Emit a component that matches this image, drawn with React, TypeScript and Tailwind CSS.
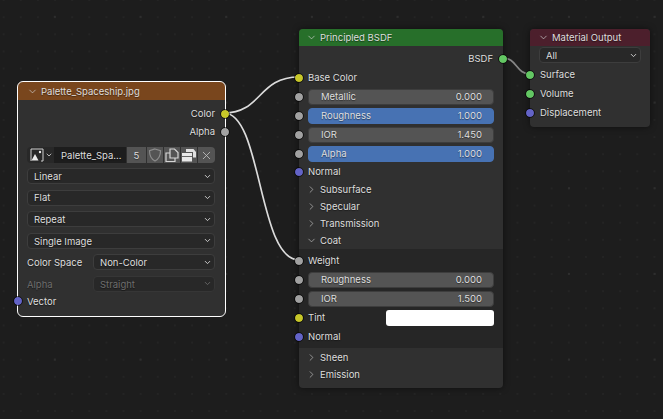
import { ChevronDown, ChevronRight, X } from 'lucide-react';

const YELLOW = 'bg-[#c7c729]';
const GRAY = 'bg-[#a1a1a1]';
const PURPLE = 'bg-[#6363c7]';
const GREEN = 'bg-[#63c763]';

function Socket({ color, side = 'left' }: { color: string; side?: 'left' | 'right' }) {
  return (
    <div
      className={`absolute top-1/2 -mt-[4px] size-[8px] rounded-full outline outline-1 outline-black/60 ${color} ${
        side === 'left' ? '-left-[4px]' : '-right-[4px]'
      }`}
    />
  );
}

function LabelRow({ label, color, pad = 'pl-[9px]' }: { label: string; color: string; pad?: string }) {
  return (
    <div className={`relative flex h-[19px] items-center ${pad}`}>
      <Socket color={color} />
      <span>{label}</span>
    </div>
  );
}

function OutputRow({ label, color }: { label: string; color: string }) {
  return (
    <div className="relative flex h-[19px] items-center justify-end pr-[10px]">
      <span>{label}</span>
      <Socket color={color} side="right" />
    </div>
  );
}

function Slider({ label, value, active }: { label: string; value: string; active?: boolean }) {
  return (
    <div className="relative flex h-[19px] items-center pl-[9px] pr-[9px]">
      <Socket color={GRAY} />
      <div
        className={`flex h-[16px] w-full items-center justify-between rounded-[4px] border pl-[12px] pr-[11px] ${
          active ? 'border-[#4772b3] bg-[#4772b3]' : 'border-[#3d3d3d] bg-[#545454]'
        }`}
      >
        <span>{label}</span>
        <span>{value}</span>
      </div>
    </div>
  );
}

function PanelToggle({ label, open }: { label: string; open?: boolean }) {
  return (
    <div className="flex h-[17px] items-center gap-[3px] pl-[7px]">
      {open ? (
        <ChevronDown className="size-[11px] text-[#bdbdbd]" strokeWidth={1.5} />
      ) : (
        <ChevronRight className="size-[11px] text-[#bdbdbd]" strokeWidth={1.5} />
      )}
      <span>{label}</span>
    </div>
  );
}

function Select({ label, disabled, className = '' }: { label: string; disabled?: boolean; className?: string }) {
  return (
    <div
      className={`flex h-[16px] items-center justify-between rounded-[4px] border bg-[#282828] pl-[6px] pr-[2px] ${
        disabled ? 'border-[#363636] text-[#6e6e6e]' : 'border-[#3d3d3d]'
      } ${className}`}
    >
      <span>{label}</span>
      <ChevronDown className={`size-[9px] ${disabled ? 'text-[#666]' : 'text-[#d0d0d0]'}`} strokeWidth={2.5} />
    </div>
  );
}

function NodeHeader({ title, color, className = 'h-[17px] pl-[7px]' }: { title: string; color: string; className?: string }) {
  return (
    <div className={`flex items-center gap-[3px] rounded-t-[4px] ${color} ${className}`}>
      <ChevronDown className="size-[11px] text-[#d0d0d0]" strokeWidth={1.5} />
      <span>{title}</span>
    </div>
  );
}

function ImageIcon() {
  return (
    <svg viewBox="0 0 14 14" className="size-[14px]">
      <path d="M1 13V1h12v12h-2" fill="none" stroke="#cfcfcf" strokeWidth="1" />
      <path d="M1.500 12.500 5 6l3.500 6.500z" fill="#ececec" />
      <circle cx="10" cy="4" r="1.200" fill="#ececec" />
    </svg>
  );
}

function ShieldIcon() {
  return (
    <svg viewBox="0 0 14 14" className="size-[14px]">
      <path d="M7 1 12.500 2.800c0 5-1 8-5.500 10.200C2.500 10.800 1.500 7.800 1.500 2.800z" fill="none" stroke="#8c8c8c" strokeWidth="1.200" />
    </svg>
  );
}

function CopyIcon() {
  return (
    <svg viewBox="0 0 14 14" className="size-[14px]">
      <path d="M5 10V1h4.500L13 4.500V10z" fill="none" stroke="#d6d6d6" strokeWidth="1.200" />
      <path d="M5 5H1v8.500h9V10" fill="none" stroke="#d6d6d6" strokeWidth="1.200" />
    </svg>
  );
}

function PackIcon() {
  return (
    <svg viewBox="0 0 14 14" className="size-[14px]">
      <path d="M4 1h7.500L14 4v5.500h-3V4H4z" fill="#e0e0e0" />
      <path d="M0 5h10v8.500H0z" fill="#e8e8e8" />
      <path d="M0 8.500h10" stroke="#666" strokeWidth="1" />
    </svg>
  );
}

function ImageRow() {
  const cell = 'flex h-full items-center justify-center bg-[#545454]';
  return (
    <div className="ml-[9px] mr-[10px] flex h-[16px] overflow-hidden rounded-[4px]">
      <div className="flex h-full w-[27px] items-center gap-px bg-[#282828] pl-[3px]">
        <ImageIcon />
        <ChevronDown className="size-[8px] text-[#d0d0d0]" strokeWidth={2.5} />
      </div>
      <div className="flex h-full w-[72px] items-center bg-[#1d1d1d] pl-[7px]"><span>Palette_Spa...</span></div>
      <div className={`${cell} ml-px w-[19px]`}><span>5</span></div>
      <div className={`${cell} ml-px w-[16px]`}><ShieldIcon /></div>
      <div className={`${cell} ml-px w-[16px]`}><CopyIcon /></div>
      <div className={`${cell} ml-px w-[16px]`}><PackIcon /></div>
      <div className={`${cell} ml-px flex-1`}><X className="size-[13px] text-[#c4c4c4]" strokeWidth={1.5} /></div>
    </div>
  );
}

export default function App() {
  return (
    <div
      className="relative h-[419px] w-[663px] overflow-hidden bg-[#1d1d1d] text-[9.5px] text-[#dedede] [text-shadow:0_1px_1px_rgba(0,0,0,0.45)] [&_span]:translate-y-px [background-image:radial-gradient(circle,#2e2e2e_0.8px,transparent_1.2px),radial-gradient(circle,#242424_0.7px,transparent_1px)] [background-size:85.7px_85.7px,17.14px_17.14px] [background-position:12px_-26px,-4.9px_-8.5px]"
      style={{ fontFamily: 'Inter, "Liberation Sans", sans-serif' }}
    >
      {/* Wires */}
      <svg className="absolute inset-0" width="663" height="419" fill="none">
        <path d="M224 113C262 113 258 77 299 77" stroke="#dcdcdc" strokeWidth="1.700" />
        <path d="M224 113C262 113 258 260 299 260" stroke="#dcdcdc" strokeWidth="1.700" />
        <path d="M503 58C517 58 516 74 530 74" stroke="#858585" strokeWidth="1.700" />
      </svg>

      {/* Image Texture node */}
      <div className="absolute left-[18px] top-[82px] h-[234px] w-[207px] rounded-[5px] bg-[#303030] outline outline-1 outline-white">
        <NodeHeader title="Palette_Spaceship.jpg" color="bg-[#79461d]" className="h-[18px] pl-[9px]" />
        <div className="pt-[4px]">
          <OutputRow label="Color" color={YELLOW} />
          <div className="-mt-[1px]"><OutputRow label="Alpha" color={GRAY} /></div>
          <div className="mt-[6px]"><ImageRow /></div>
          <div className="ml-[9px] mr-[10px] mt-[5px] flex flex-col gap-[5.6px]">
            <Select label="Linear" />
            <Select label="Flat" />
            <Select label="Repeat" />
            <Select label="Single Image" />
            <div className="flex items-center">
              <span className="w-[66px]">Color Space</span>
              <Select label="Non-Color" className="flex-1" />
            </div>
            <div className="flex items-center text-[#6e6e6e]">
              <span className="w-[66px]">Alpha</span>
              <Select label="Straight" disabled className="flex-1" />
            </div>
          </div>
          <LabelRow label="Vector" color={PURPLE} />
        </div>
      </div>

      {/* Principled BSDF node */}
      <div className="absolute left-[299px] top-[29px] h-[359px] w-[204px] rounded-[4px] bg-[#303030] shadow-[0_0_6px_rgba(0,0,0,0.5)]">
        <NodeHeader title="Principled BSDF" color="bg-[#276f2a]" />
        <div className="pt-[3px]">
          <OutputRow label="BSDF" color={GREEN} />
          <LabelRow label="Base Color" color={YELLOW} />
          <Slider label="Metallic" value="0.000" />
          <Slider label="Roughness" value="1.000" active />
          <Slider label="IOR" value="1.450" />
          <Slider label="Alpha" value="1.000" active />
          <div className="-mt-[1px]"><LabelRow label="Normal" color={PURPLE} /></div>
          <PanelToggle label="Subsurface" />
          <PanelToggle label="Specular" />
          <PanelToggle label="Transmission" />
          <PanelToggle label="Coat" open />
          <div className="bg-[#262626] py-[2px]">
            <LabelRow label="Weight" color={GRAY} />
            <Slider label="Roughness" value="0.000" />
            <Slider label="IOR" value="1.500" />
            <div className="relative flex h-[19px] items-center justify-between pl-[9px] pr-[9px]">
              <Socket color={YELLOW} />
              <span>Tint</span>
              <div className="h-[16px] w-[108px] rounded-[3px] bg-white" />
            </div>
            <LabelRow label="Normal" color={PURPLE} />
          </div>
          <div className="pt-[1px]">
            <PanelToggle label="Sheen" />
            <PanelToggle label="Emission" />
          </div>
        </div>
      </div>

      {/* Material Output node */}
      <div className="absolute left-[530px] top-[29px] h-[98px] w-[120px] rounded-[4px] bg-[#303030] shadow-[0_0_6px_rgba(0,0,0,0.5)]">
        <NodeHeader title="Material Output" color="bg-[#4c1f2c]" className="h-[17px] pl-[8px]" />
        <div className="pt-[1px]">
          <Select label="All" className="mx-[9px]" />
          <div className="mt-[1px]">
            <div className="pt-[1px]"><LabelRow label="Surface" color={GREEN} pad="pl-[10px]" /></div>
            <LabelRow label="Volume" color={GREEN} pad="pl-[10px]" />
            <LabelRow label="Displacement" color={PURPLE} pad="pl-[10px]" />
          </div>
        </div>
      </div>
    </div>
  );
}
